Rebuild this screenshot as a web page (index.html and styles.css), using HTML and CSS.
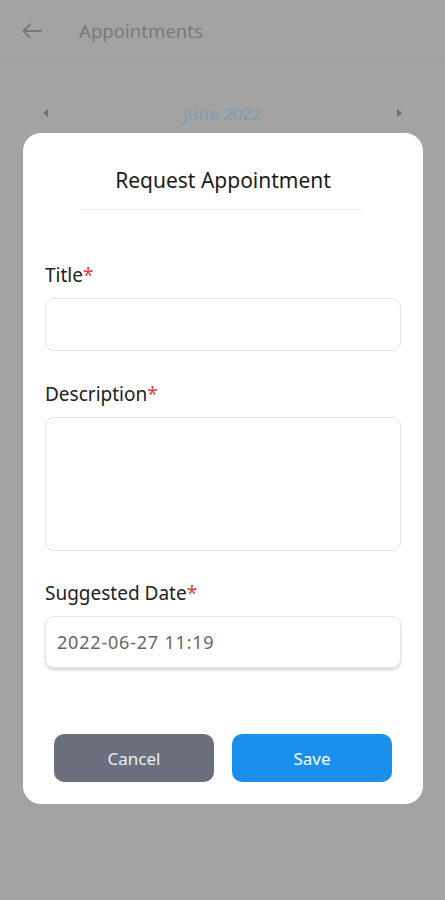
FILE: index.html
```html
<!DOCTYPE html>
<html lang="en">
<head>
<meta charset="utf-8">
<title>Request Appointment</title>
<link rel="stylesheet" href="styles.css">
</head>
<body>
<div class="page">
  <header class="topbar">
    <svg class="back" width="20" height="16" viewBox="0 0 20 16"><path d="M19 8H2M8 1.5L1.5 8L8 14.5" fill="none" stroke="#777" stroke-width="1.8" stroke-linecap="round" stroke-linejoin="round"/></svg>
    <span class="topbar-title">Appointments</span>
  </header>
  <div class="month-nav">
    <span class="tri tri-left"></span>
    <span class="month">June 2022</span>
    <span class="tri tri-right"></span>
  </div>
</div>
<div class="overlay">
  <div class="modal">
    <h1 class="modal-title">Request Appointment</h1>
    <div class="divider"></div>
    <div class="field field-first">
      <label class="label">Title<span class="req">*</span></label>
      <div class="input"></div>
    </div>
    <div class="field field-desc">
      <label class="label">Description<span class="req">*</span></label>
      <div class="input textarea"></div>
    </div>
    <div class="field">
      <label class="label">Suggested Date<span class="req">*</span></label>
      <div class="input date">2022-06-27 11:19</div>
    </div>
    <div class="actions">
      <button class="btn btn-cancel">Cancel</button>
      <button class="btn btn-save">Save</button>
    </div>
  </div>
</div>
</body>
</html>
```
FILE: styles.css
```css
html, body {
  margin: 0;
  padding: 0;
}
body {
  width: 445px;
  height: 900px;
  background: #a3a3a3;
  font-family: "Noto Sans", "Open Sans", sans-serif;
  position: relative;
  overflow: hidden;
}
.page {
  display: flex;
  flex-direction: column;
}
.topbar {
  height: 62px;
  display: flex;
  align-items: center;
  padding-left: 22px;
  border-bottom: 1px solid #a0a0a0;
  box-sizing: border-box;
}
.back {
  display: block;
  margin-right: 37px;
}
.topbar-title {
  font-size: 18.6px;
  color: #7a7a7a;
}
.month-nav {
  display: flex;
  align-items: center;
  justify-content: space-between;
  padding: 0 43px 0 43px;
  margin-top: 39px;
  height: 24px;
}
.month {
  font-size: 17px;
  color: #819cb2;
}
.tri {
  width: 0;
  height: 0;
  border-top: 4px solid transparent;
  border-bottom: 4px solid transparent;
}
.tri-left {
  border-right: 5px solid #6f6f6f;
}
.tri-right {
  border-left: 5px solid #6f6f6f;
}
.overlay {
  position: absolute;
  inset: 0;
  padding: 133px 22px 0 23px;
}
.modal {
  background: #fff;
  border-radius: 18px;
  padding: 33px 22px 22px 22px;
  display: flex;
  flex-direction: column;
}
.modal-title {
  margin: 0;
  font-size: 21px;
  font-weight: 400;
  line-height: 28px;
  text-align: center;
  color: #1c1c1c;
}
.divider {
  align-self: center;
  width: 280px;
  height: 1px;
  background: #ececec;
  margin-top: 15px;
}
.field {
  display: flex;
  flex-direction: column;
  margin-top: 30px;
}
.field-first {
  margin-top: 53px;
}
.field-desc {
  margin-top: 31px;
}
.label {
  font-size: 19px;
  line-height: 24px;
  color: #222;
  margin-bottom: 11px;
}
.req {
  color: #e53935;
}
.input {
  height: 53px;
  border: 1px solid #e6e6e6;
  border-radius: 9px;
  box-sizing: border-box;
}
.textarea {
  height: 134px;
}
.date {
  height: 52px;
  display: flex;
  align-items: center;
  padding-left: 11px;
  font-size: 18px;
  color: #666;
  letter-spacing: 0.8px;
  box-shadow: 0 2px 3px rgba(0,0,0,0.18);
}
.actions {
  display: flex;
  justify-content: center;
  gap: 18px;
  margin-top: 66px;
}
.btn {
  width: 160px;
  height: 48px;
  border: none;
  border-radius: 10px;
  font-family: "Noto Sans", sans-serif;
  font-size: 17px;
  color: #fff;
}
.btn-cancel {
  background: #6b6e7d;
  color: #eceef2;
}
.btn-save {
  background: #1a8fec;
}
```
